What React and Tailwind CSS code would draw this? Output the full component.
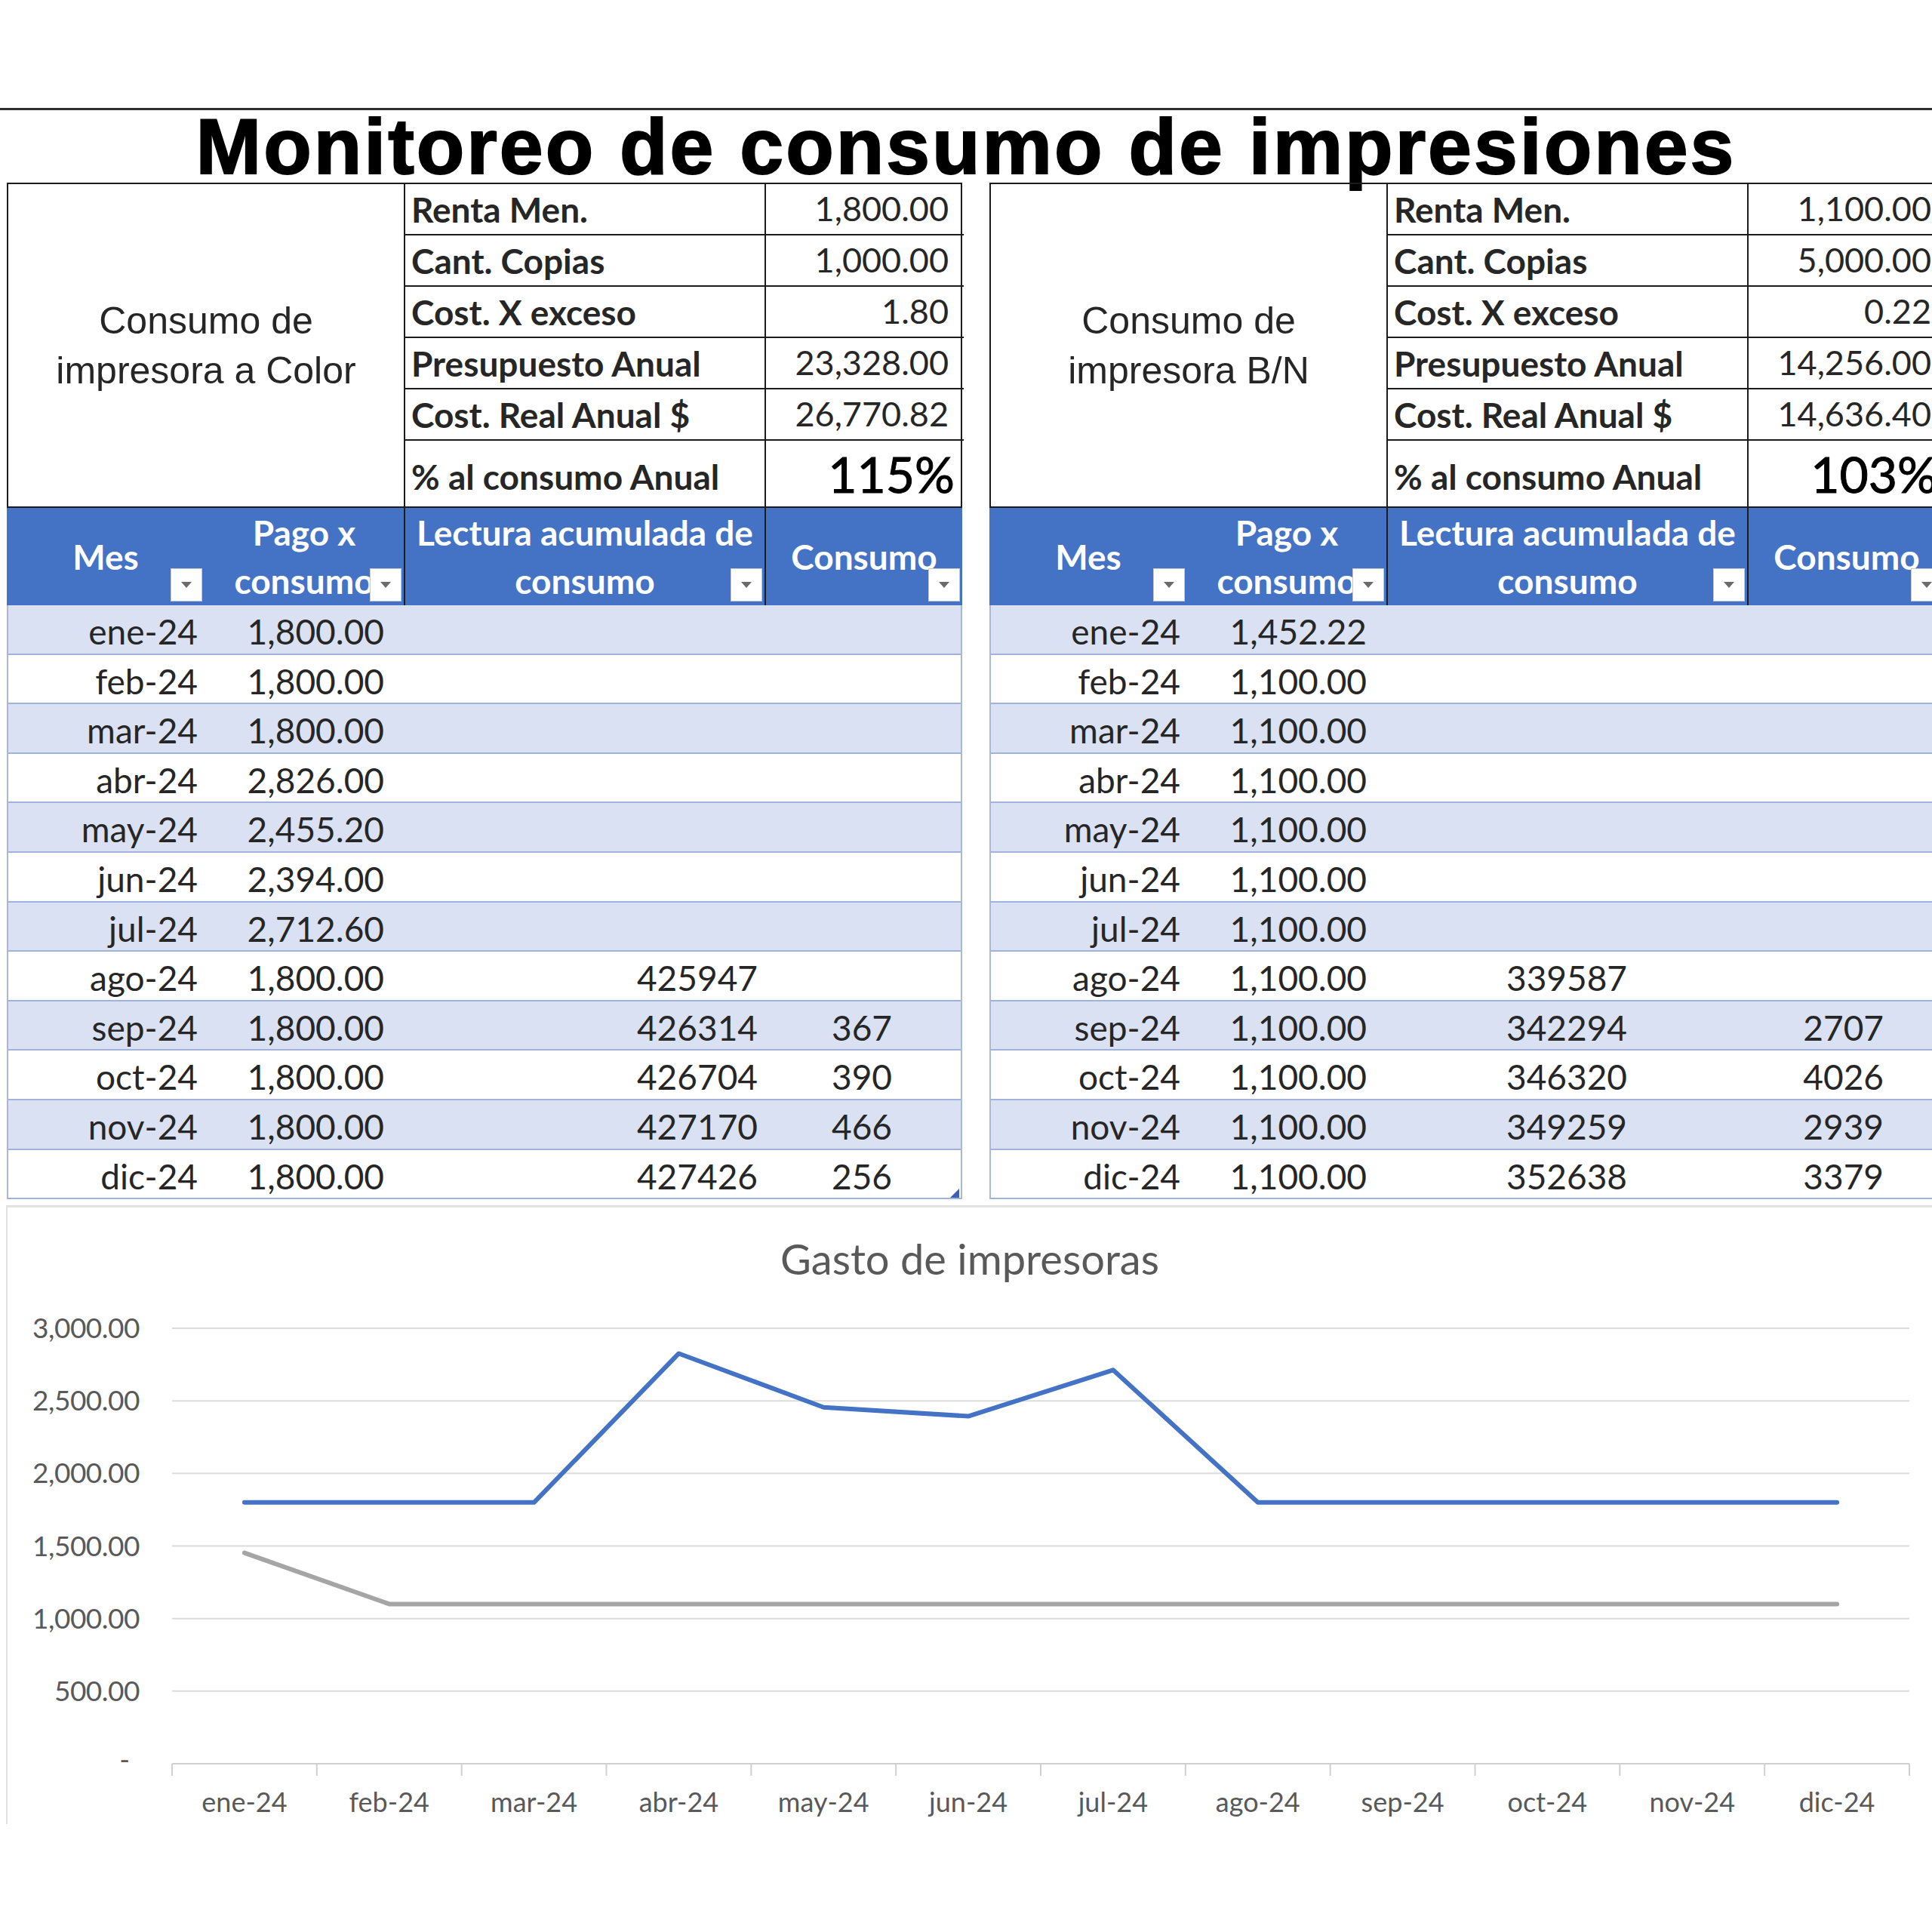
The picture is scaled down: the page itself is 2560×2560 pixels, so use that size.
import React from "react";

const MONTHS = ["ene-24", "feb-24", "mar-24", "abr-24", "may-24", "jun-24", "jul-24", "ago-24", "sep-24", "oct-24", "nov-24", "dic-24"];

const BLOCKS = [
  {
    title: ["Consumo de", "impresora a Color"],
    info: [
      ["Renta Men.", "1,800.00"],
      ["Cant. Copias", "1,000.00"],
      ["Cost. X exceso", "1.80"],
      ["Presupuesto Anual", "23,328.00"],
      ["Cost. Real Anual $", "26,770.82"],
    ],
    pct: "115%",
    pago: ["1,800.00", "1,800.00", "1,800.00", "2,826.00", "2,455.20", "2,394.00", "2,712.60", "1,800.00", "1,800.00", "1,800.00", "1,800.00", "1,800.00"],
    lectura: ["", "", "", "", "", "", "", "425947", "426314", "426704", "427170", "427426"],
    consumo: ["", "", "", "", "", "", "", "", "367", "390", "466", "256"],
    lecturaCls: "justify-end pr-[9px]",
    consumoCls: "justify-end pr-[91px]",
    handle: true,
  },
  {
    title: ["Consumo de", "impresora B/N"],
    info: [
      ["Renta Men.", "1,100.00"],
      ["Cant. Copias", "5,000.00"],
      ["Cost. X exceso", "0.22"],
      ["Presupuesto Anual", "14,256.00"],
      ["Cost. Real Anual $", "14,636.40"],
    ],
    pct: "103%",
    pago: ["1,452.22", "1,100.00", "1,100.00", "1,100.00", "1,100.00", "1,100.00", "1,100.00", "1,100.00", "1,100.00", "1,100.00", "1,100.00", "1,100.00"],
    lectura: ["", "", "", "", "", "", "", "339587", "342294", "346320", "349259", "352638"],
    consumo: ["", "", "", "", "", "", "", "", "2707", "4026", "2939", "3379"],
    lecturaCls: "justify-center",
    consumoCls: "justify-end pr-[79px]",
    handle: false,
  },
];

function FilterButton() {
  return (
    <div className="absolute right-[3px] bottom-[5px] w-[42px] h-[44px] bg-white border border-[#c8c8c8] flex items-center justify-center">
      <svg width="16" height="10" viewBox="0 0 16 10">
        <polygon points="1,1 15,1 8,9" fill="#6b6b6b" />
      </svg>
    </div>
  );
}

function Block({ b }) {
  return (
    <div className="w-[1266px] shrink-0 font-['Lato',sans-serif] text-[#262626]">
      {/* info box */}
      <div className="grid grid-cols-[526px_478px_262px] border-2 border-[#1c1c1c]">
        <div className="row-span-6 border-r-2 border-[#1c1c1c] flex items-center justify-center text-center font-['Liberation_Sans',Arial,sans-serif] text-[50px] leading-[66px] text-[#262626]">
          <div>
            {b.title[0]}
            <br />
            {b.title[1]}
          </div>
        </div>
        {b.info.map(([label, value]) => (
          <React.Fragment key={label}>
            <div className="h-[68px] border-r-2 border-b-2 border-[#1c1c1c] flex items-center pl-[8px] text-[46px] font-bold">{label}</div>
            <div className="h-[68px] border-b-2 border-[#1c1c1c] flex items-center justify-end pr-[20px] text-[45px]">{value}</div>
          </React.Fragment>
        ))}
        <div className="h-[87px] border-r-2 border-[#1c1c1c] flex items-end pl-[8px] pb-[16px] text-[46px] leading-none font-bold">% al consumo Anual</div>
        <div className="h-[87px] flex items-end justify-end pr-[12px] pb-[10px] text-[66px] leading-none text-black [-webkit-text-stroke:1px_#000]">{b.pct}</div>
      </div>

      {/* header */}
      <div className="grid grid-cols-[262px_264px_478px_262px] h-[129px] bg-[#4472C4] text-white font-bold text-[46px] leading-[64px]">
        <div className="relative flex items-center justify-center">
          Mes
          <FilterButton />
        </div>
        <div className="relative flex items-center justify-center text-center">
          <div>
            Pago x
            <br />
            consumo
          </div>
          <FilterButton />
        </div>
        <div className="relative border-l-2 border-[#1c1c1c] flex items-center justify-center text-center">
          <div>
            Lectura acumulada de
            <br />
            consumo
          </div>
          <FilterButton />
        </div>
        <div className="relative border-l-2 border-[#1c1c1c] flex items-center justify-center">
          Consumo
          <FilterButton />
        </div>
      </div>

      {/* rows */}
      <div className="relative border-x-2 border-[#a9b8d8]">
        {MONTHS.map((m, i) => (
          <div
            key={m}
            className={`grid grid-cols-[260px_264px_478px_260px] h-[65.6px] border-b-2 border-[#9fb3dc] text-[46px] ${i % 2 === 0 ? "bg-[#D9E1F2]" : "bg-white"}`}
          >
            <div className="flex items-center justify-end pr-[9px]">{m}</div>
            <div className="flex items-center justify-end pr-[26px]">{b.pago[i]}</div>
            <div className={`flex items-center ${b.lecturaCls}`}>{b.lectura[i]}</div>
            <div className={`flex items-center ${b.consumoCls}`}>{b.consumo[i]}</div>
          </div>
        ))}
        {b.handle && (
          <svg className="absolute right-[2px] bottom-[2px]" width="12" height="12" viewBox="0 0 12 12">
            <polygon points="12,0 12,12 0,12" fill="#3e5fb5" />
          </svg>
        )}
      </div>
    </div>
  );
}

const BLUE = [1800, 1800, 1800, 2826, 2455.2, 2394, 2712.6, 1800, 1800, 1800, 1800, 1800];
const GRAY = [1452.22, 1100, 1100, 1100, 1100, 1100, 1100, 1100, 1100, 1100, 1100, 1100];
const X0 = 218;
const X1 = 2520;
const CW = (X1 - X0) / 12;
const Y0 = 637;
const K = 577 / 3000;
const px = (i) => X0 + CW * (i + 0.5);
const py = (v) => Y0 - v * K;

function Chart() {
  const ticks = [3000, 2500, 2000, 1500, 1000, 500];
  const lbl = ["3,000.00", "2,500.00", "2,000.00", "1,500.00", "1,000.00", "500.00"];
  return (
    <svg width="2550" height="717" viewBox="0 0 2550 717" className="block">
      {ticks.map((t, i) => (
        <g key={t}>
          <line x1={X0} x2={X1} y1={py(t)} y2={py(t)} stroke="#dcdcdc" strokeWidth="2" />
          <text x="175" y={py(t) + 13} textAnchor="end" fontFamily="Lato, sans-serif" fontSize="37" letterSpacing="-0.5" fill="#595959">
            {lbl[i]}
          </text>
        </g>
      ))}
      <line x1={X0} x2={X1} y1={Y0} y2={Y0} stroke="#d0d0d0" strokeWidth="2" />
      <text x="162" y={Y0 + 8} textAnchor="end" fontFamily="Lato, sans-serif" fontSize="37" fill="#595959">
        -
      </text>
      {Array.from({ length: 13 }).map((_, i) => (
        <line key={i} x1={X0 + CW * i} x2={X0 + CW * i} y1={Y0} y2={Y0 + 16} stroke="#d0d0d0" strokeWidth="2" />
      ))}
      {MONTHS.map((m, i) => (
        <text key={m} x={px(i)} y="701" textAnchor="middle" fontFamily="Lato, sans-serif" fontSize="36" fill="#595959">
          {m}
        </text>
      ))}
      <polyline
        points={GRAY.map((v, i) => `${px(i)},${py(v)}`).join(" ")}
        fill="none"
        stroke="#A5A5A5"
        strokeWidth="6"
        strokeLinejoin="round"
        strokeLinecap="round"
      />
      <polyline
        points={BLUE.map((v, i) => `${px(i)},${py(v)}`).join(" ")}
        fill="none"
        stroke="#4472C4"
        strokeWidth="6"
        strokeLinejoin="round"
        strokeLinecap="round"
      />
    </svg>
  );
}

export default function App() {
  return (
    <div className="w-[2560px] h-[2560px] overflow-hidden bg-white">
      <div className="h-[143px]" />
      <div className="h-[3px] bg-[#2e2e2e]" />
      <div className="h-[96px] text-center font-['Liberation_Sans',Arial,sans-serif] font-bold text-[104px] leading-[96px] tracking-[3px] text-black whitespace-nowrap [-webkit-text-stroke:2px_#000]">
        Monitoreo de consumo de impresiones
      </div>
      <div className="flex gap-[36px] pl-[9px]">
        {BLOCKS.map((b, i) => (
          <Block key={i} b={b} />
        ))}
      </div>
      <div className="mt-[8px] ml-[8px] h-[820px] border-l-2 border-t-[3px] border-[#e2e2e2]">
        <div className="pt-[36px] h-[100px] text-center font-['Lato',sans-serif] text-[56px] leading-[64px] text-[#595959]">
          Gasto de impresoras
        </div>
        <Chart />
      </div>
    </div>
  );
}
